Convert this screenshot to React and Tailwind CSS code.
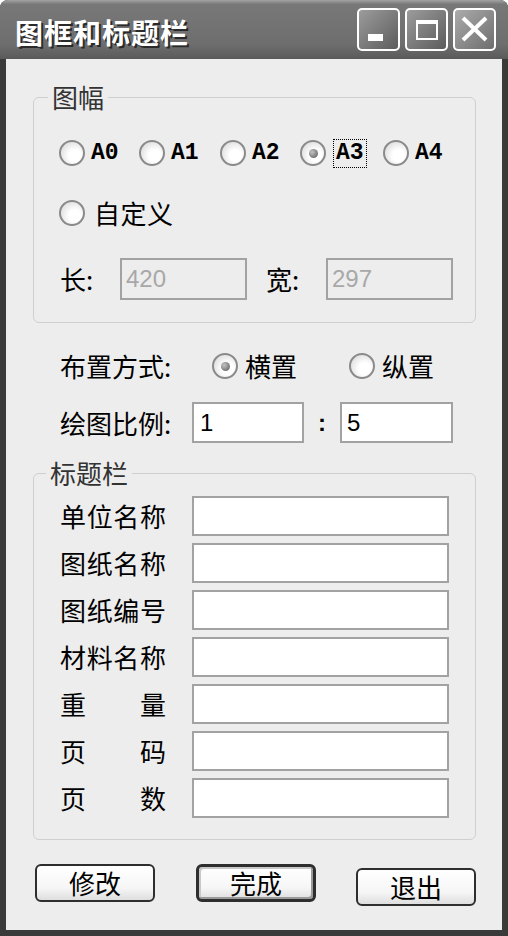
import React from "react";

const CJK = "font-['Noto_Sans_CJK_SC',sans-serif]";

function Radio({ checked }) {
  return (
    <span className="flex h-[26px] w-[26px] shrink-0 items-center justify-center rounded-full border-2 border-[#8a8a8a] bg-[radial-gradient(circle_at_62%_62%,#ffffff_30%,#d2d2d2_100%)]">
      {checked && (
        <span className="h-[9px] w-[9px] rounded-full bg-[radial-gradient(circle_at_35%_35%,#c4c4c4,#555555)]" />
      )}
    </span>
  );
}

function PaperRadio({ label, checked, focus, w }) {
  return (
    <div className={`flex items-center ${w}`}>
      <Radio checked={checked} />
      {focus ? (
        <span className="ml-[7px] border border-dotted border-black px-[2px] font-['Liberation_Mono',monospace] text-[23px] font-bold leading-[27px] text-black">
          {label}
        </span>
      ) : (
        <span className="ml-[6px] font-['Liberation_Mono',monospace] text-[23px] font-bold leading-[27px] text-black">
          {label}
        </span>
      )}
    </div>
  );
}

function Spread({ chars }) {
  return (
    <div className={`flex w-[106px] justify-between ${CJK} text-[26px] leading-[30px] text-black`}>
      {chars.map((c, i) => (
        <span key={i}>{c}</span>
      ))}
    </div>
  );
}

function TitleButton({ children, close }) {
  return (
    <div
      className={`h-[43px] w-[43px] rounded-[5px] border-2 border-white ${
        close
          ? "bg-[linear-gradient(135deg,#ababab,#6e6e6e)]"
          : "bg-[linear-gradient(135deg,#9c9c9c,#5c5c5c)]"
      }`}
    >
      <svg width="39" height="39" viewBox="0 0 39 39">
        {children}
      </svg>
    </div>
  );
}

function DlgButton({ label, def, extra = "" }) {
  return (
    <div
      className={`flex h-[38px] w-[120px] items-center justify-center rounded-[6px] ${
        def
          ? "border-[3px] border-[#2e2e2e] shadow-[inset_-2px_-2px_0_#9a9a9a,inset_2px_2px_0_#c8c8c8]"
          : "border-2 border-[#2e2e2e]"
      } bg-[linear-gradient(180deg,#ffffff_0%,#f6f6f6_65%,#dedede_100%)] ${CJK} text-[26px] leading-[30px] text-black ${extra}`}
    >
      {label}
    </div>
  );
}

const rows = [
  ["单", "位", "名", "称"],
  ["图", "纸", "名", "称"],
  ["图", "纸", "编", "号"],
  ["材", "料", "名", "称"],
  ["重", "量"],
  ["页", "码"],
  ["页", "数"],
];

export default function App() {
  return (
    <div className="flex h-[936px] w-[508px] flex-col overflow-hidden rounded-t-[8px] bg-[#3a3a3a]">
      {/* Title bar */}
      <div className="flex h-[59px] shrink-0 items-center bg-[linear-gradient(180deg,#a4a4a4_0%,#787878_7%,#6e6e6e_75%,#5a5a5a_100%)] pl-[15px] pr-[12px]">
        <span
          className={`${CJK} pt-[5px] text-[28px] font-bold leading-[34px] tracking-[1px] text-white [text-shadow:2px_2px_0_#2a2a2a]`}
        >
          图框和标题栏
        </span>
        <div className="ml-auto flex gap-[5px]">
          <TitleButton>
            <rect x="9" y="24" width="15" height="7" fill="white" />
          </TitleButton>
          <TitleButton>
            <rect x="9" y="10" width="22" height="4" fill="white" />
            <rect x="9" y="10" width="2" height="20" fill="white" />
            <rect x="29" y="10" width="2" height="20" fill="white" />
            <rect x="9" y="28" width="22" height="2" fill="white" />
          </TitleButton>
          <TitleButton close>
            <line x1="8" y1="8" x2="31" y2="30" stroke="white" strokeWidth="4" />
            <line x1="31" y1="8" x2="8" y2="30" stroke="white" strokeWidth="4" />
          </TitleButton>
        </div>
      </div>

      {/* Client area */}
      <div className="mx-[6px] mb-[6px] flex flex-1 flex-col bg-[#ededed] pl-[27px] pr-[26px]">
        {/* 图幅 */}
        <fieldset className="mt-[24px] rounded-[6px] border border-[#cfcfcf] pb-[22px]">
          <legend
            className={`ml-[14px] px-[4px] ${CJK} text-[26px] leading-[28px] text-[#333333]`}
          >
            图幅
          </legend>
          <div className="mt-[27px] flex h-[30px] items-center pl-[25px]">
            <PaperRadio label="A0" w="w-[80px]" />
            <PaperRadio label="A1" w="w-[81px]" />
            <PaperRadio label="A2" w="w-[80px]" />
            <PaperRadio label="A3" w="w-[83px]" checked focus />
            <PaperRadio label="A4" w="" />
          </div>
          <div className="mt-[30px] flex h-[30px] items-center pl-[25px]">
            <Radio />
            <span className={`ml-[9px] ${CJK} text-[26px] leading-[30px] tracking-[0.5px] text-black`}>
              自定义
            </span>
          </div>
          <div className="mt-[30px] flex h-[42px] items-center pl-[26px]">
            <span className={`w-[60px] ${CJK} text-[26px] leading-[30px] text-black`}>长:</span>
            <div className="flex h-[42px] w-[127px] items-center border-2 border-[#a2a2a2] bg-[#ededed] pl-[4px] font-['Liberation_Sans',sans-serif] text-[24px] text-[#a8a8a8]">
              420
            </div>
            <span className={`ml-[19px] w-[60px] ${CJK} text-[26px] leading-[30px] text-black`}>宽:</span>
            <div className="flex h-[42px] w-[127px] items-center border-2 border-[#a2a2a2] bg-[#ededed] pl-[4px] font-['Liberation_Sans',sans-serif] text-[24px] text-[#a8a8a8]">
              297
            </div>
          </div>
        </fieldset>

        {/* 布置方式 */}
        <div className="mt-[28px] flex h-[30px] items-center pl-[27px]">
          <span className={`w-[152px] ${CJK} text-[26px] leading-[30px] text-black`}>布置方式:</span>
          <div className="flex w-[137px] items-center">
            <Radio checked />
            <span className={`ml-[7px] ${CJK} text-[26px] leading-[30px] text-black`}>横置</span>
          </div>
          <div className="flex items-center">
            <Radio />
            <span className={`ml-[7px] ${CJK} text-[26px] leading-[30px] text-black`}>纵置</span>
          </div>
        </div>

        {/* 绘图比例 */}
        <div className="mt-[21px] flex h-[41px] items-center pl-[27px]">
          <span className={`w-[132px] ${CJK} text-[26px] leading-[30px] text-black`}>绘图比例:</span>
          <div className="flex h-[41px] w-[112px] items-center border-2 border-[#a2a2a2] bg-white pl-[6px] font-['Liberation_Sans',sans-serif] text-[24px] text-black">
            1
          </div>
          <span className="flex w-[36px] justify-center font-['Liberation_Sans',sans-serif] text-[24px] font-bold text-black">
            :
          </span>
          <div className="flex h-[41px] w-[113px] items-center border-2 border-[#a2a2a2] bg-white pl-[5px] font-['Liberation_Sans',sans-serif] text-[24px] text-black">
            5
          </div>
        </div>

        {/* 标题栏 */}
        <fieldset className="mt-[16px] rounded-[6px] border border-[#cfcfcf] pb-[21px]">
          <legend
            className={`ml-[12px] px-[4px] ${CJK} text-[26px] leading-[28px] text-[#333333]`}
          >
            标题栏
          </legend>
          <div className="mt-[9px] flex flex-col gap-[7px] pl-[26px]">
            {rows.map((r, i) => (
              <div key={i} className="flex h-[40px] items-center">
                <Spread chars={r} />
                <div className="ml-[26px] h-[40px] w-[257px] border-2 border-[#a2a2a2] bg-white" />
              </div>
            ))}
          </div>
        </fieldset>

        {/* Buttons */}
        <div className="mt-[24px] flex items-start pl-[2px]">
          <DlgButton label="修改" />
          <DlgButton label="完成" def extra="ml-[41px]" />
          <DlgButton label="退出" extra="ml-[40px] mt-[4px]" />
        </div>
      </div>
    </div>
  );
}
